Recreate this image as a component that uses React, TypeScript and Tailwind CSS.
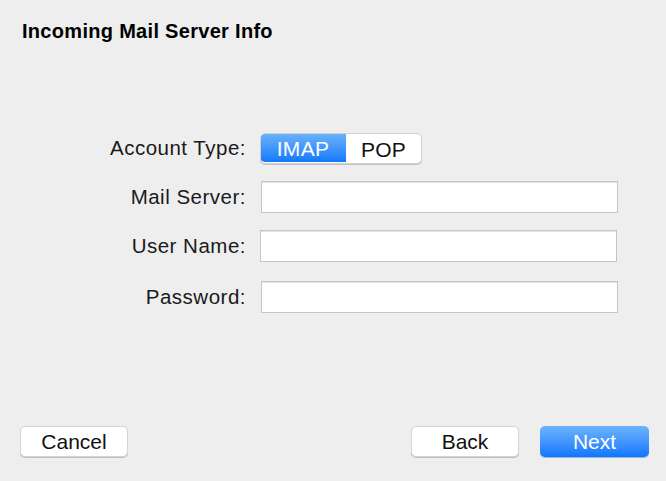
import React from "react"

const font = "font-['Liberation_Sans',Arial,Helvetica,sans-serif]"

function Field({ label, shift = 0 }: { label: string; shift?: number }) {
  return (
    <div className="flex items-center h-[32px]">
      <label className="w-[246px] text-right text-[20.5px] tracking-[0.5px] text-[#1a1a1a]">{label}</label>
      <div
        className={
          shift
            ? "ml-[14px] w-[357px] h-[32px] bg-white border border-[#c6c6c6] shadow-[inset_0_1px_0_#e2e2e2]"
            : "ml-[15px] w-[357px] h-[32px] bg-white border border-[#c6c6c6] shadow-[inset_0_1px_0_#e2e2e2]"
        }
      />
    </div>
  )
}

export default function App() {
  return (
    <div className={`w-[666px] h-[481px] bg-[#eeeeee] flex flex-col ${font} text-black`}>
      <h1 className="pl-[22px] pt-[20px] text-[20px] leading-[22px] font-bold tracking-[0.3px]">
        Incoming Mail Server Info
      </h1>

      <div className="mt-[90px] flex flex-col">
        <div className="flex items-center h-[32px]">
          <span className="w-[246px] text-right text-[20.5px] tracking-[0.5px] text-[#1a1a1a]">Account Type:</span>
          <div className="ml-[14px] flex h-[31px] rounded-[5px] border border-[#d0d0d0] bg-white shadow-[0_1px_0_#c4c4c4] overflow-hidden">
            <button className="w-[86px] h-full -my-px -ml-px rounded-l-[5px] bg-gradient-to-b from-[#6ab2fb] to-[#0f79fd] text-white text-[21px] tracking-[0.3px]">
              IMAP
            </button>
            <button className="w-[75px] h-full text-[21px] tracking-[0.3px] text-[#111]">POP</button>
          </div>
        </div>
        <div className="mt-[17px]">
          <Field label="Mail Server:" />
        </div>
        <div className="mt-[17px]">
          <Field label="User Name:" shift={1} />
        </div>
        <div className="mt-[19px]">
          <Field label="Password:" />
        </div>
      </div>

      <div className="mt-auto pb-[24px] pl-[20px] pr-[17px] flex items-center">
        <button className="w-[108px] h-[31px] rounded-[5px] bg-white border border-[#d4d4d4] shadow-[0_1px_0_#bdbdbd] text-[21px] leading-[28px] text-[#111]">
          Cancel
        </button>
        <div className="flex-1" />
        <button className="w-[108px] h-[31px] rounded-[5px] bg-white border border-[#d4d4d4] shadow-[0_1px_0_#bdbdbd] text-[21px] leading-[28px] text-[#111]">
          Back
        </button>
        <button className="ml-[21px] w-[109px] h-[31px] rounded-[5px] bg-gradient-to-b from-[#6cb3fb] to-[#0b76fd] shadow-[0_1px_0_#9bb6d8] text-white text-[21px] leading-[28px]">
          Next
        </button>
      </div>
    </div>
  )
}
